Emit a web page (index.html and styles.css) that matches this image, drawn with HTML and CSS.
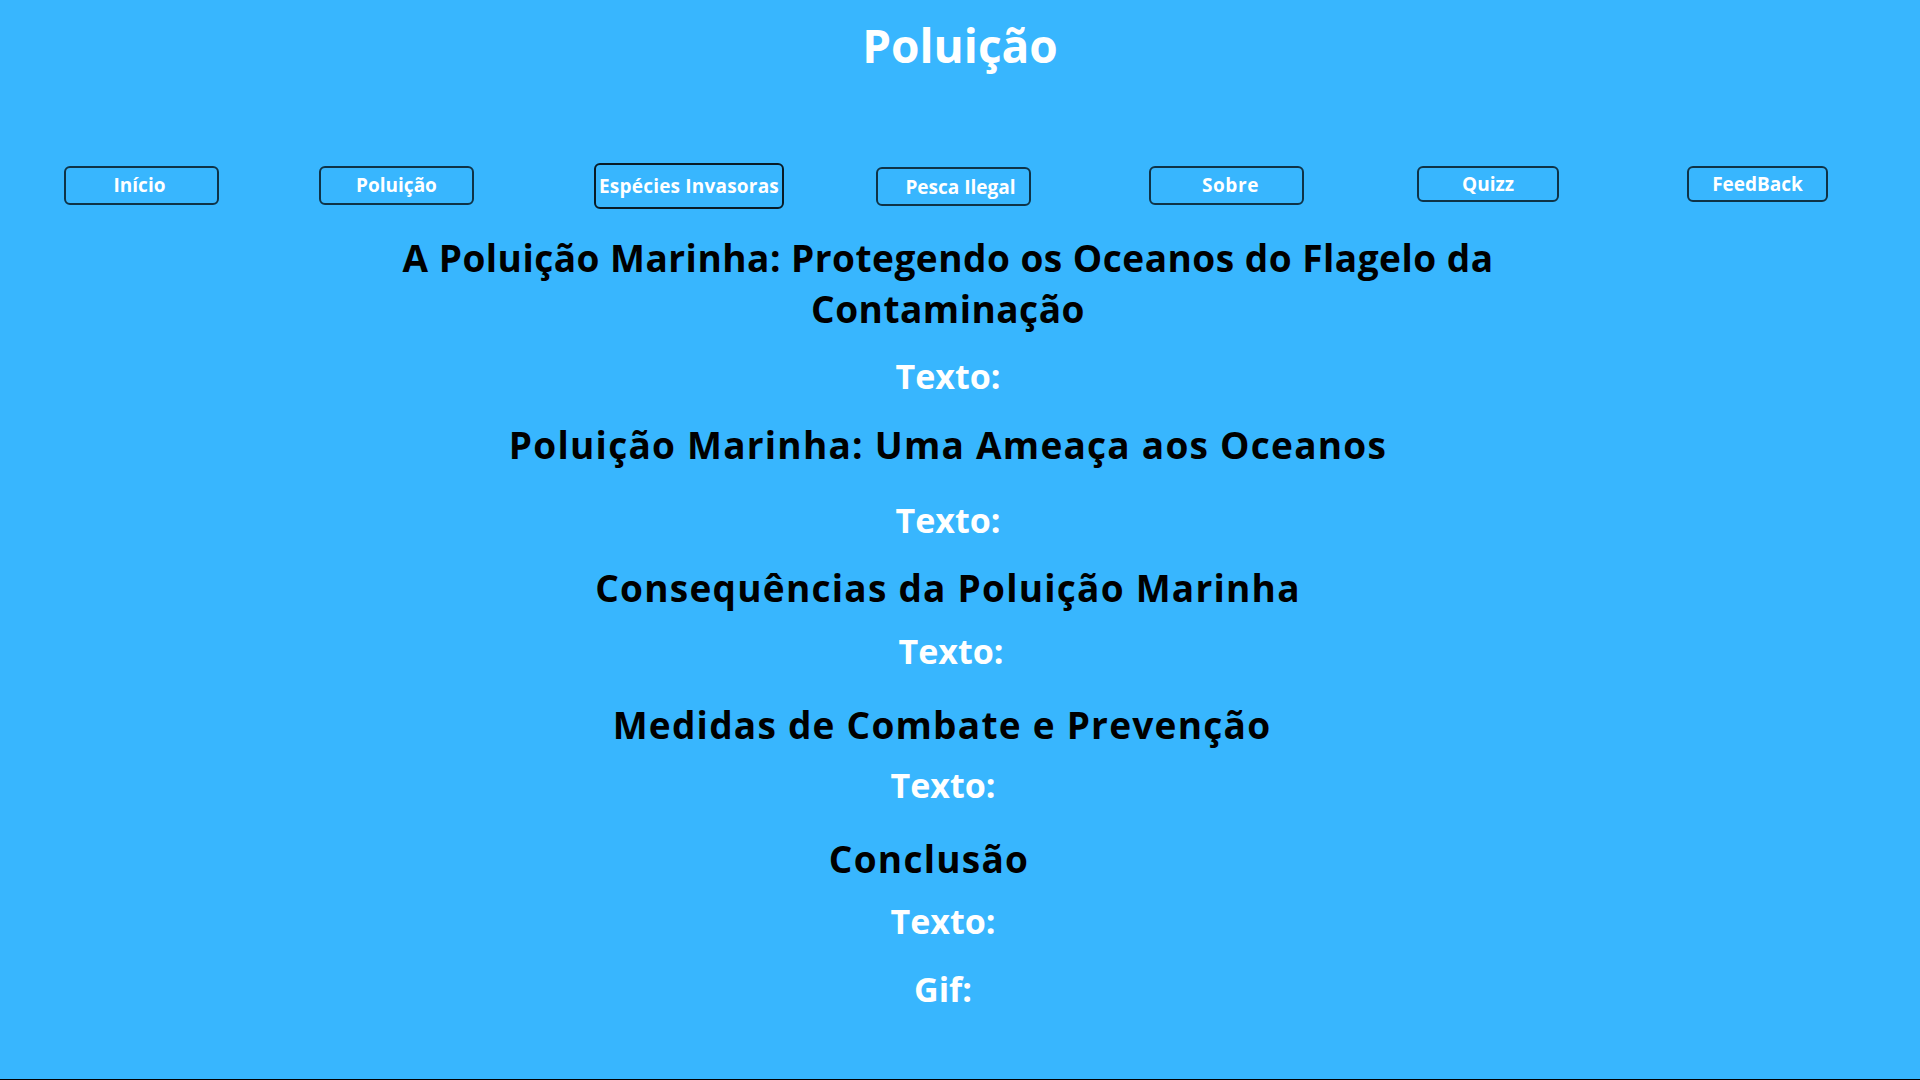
FILE: index.html
```html
<!DOCTYPE html>
<html lang="pt">
<head>
<meta charset="utf-8">
<title>Poluição</title>
<link rel="stylesheet" href="styles.css">
</head>
<body>
<div class="page">
  <h1 class="site-title">Poluição</h1>
  <nav class="nav">
    <button class="btn b-inicio">Início</button>
    <button class="btn b-poluicao">Poluição</button>
    <button class="btn b-especies">Espécies Invasoras</button>
    <button class="btn b-pesca">Pesca Ilegal</button>
    <button class="btn b-sobre">Sobre</button>
    <button class="btn b-quizz">Quizz</button>
    <button class="btn b-feedback">FeedBack</button>
  </nav>
  <main class="content">
    <h2 class="heading h-main">A Poluição Marinha: Protegendo os Oceanos do Flagelo da Contaminação</h2>
    <p class="label l1">Texto:</p>
    <h2 class="heading h-a">Poluição Marinha: Uma Ameaça aos Oceanos</h2>
    <p class="label l2">Texto:</p>
    <h2 class="heading h-b">Consequências da Poluição Marinha</h2>
    <p class="label l3">Texto:</p>
    <h2 class="heading h-c">Medidas de Combate e Prevenção</h2>
    <p class="label l4">Texto:</p>
    <h2 class="heading h-d">Conclusão</h2>
    <p class="label l5">Texto:</p>
    <p class="label l6">Gif:</p>
  </main>
</div>
</body>
</html>
```
FILE: styles.css
```css
html, body {
  margin: 0;
  padding: 0;
}
body {
  background: #38b6fe;
  font-family: "Open Sans", "Noto Sans", sans-serif;
  font-weight: 700;
}
.page {
  height: 1080px;
  box-sizing: border-box;
  border-bottom: 1px solid #000;
  overflow: hidden;
}
.site-title {
  margin: 0;
  padding-top: 15px;
  font-size: 46px;
  line-height: 60px;
  color: #fff;
  text-align: center;
  font-weight: 700;
}
.nav {
  display: flex;
  align-items: flex-start;
  margin-top: 91px;
  height: 39px;
}
.btn {
  box-sizing: border-box;
  height: 39px;
  width: 155px;
  padding: 0;
  background: transparent;
  border: 2px solid rgba(0, 0, 0, 0.72);
  border-radius: 6px;
  color: #fff;
  font-family: "Open Sans", "Noto Sans", sans-serif;
  font-weight: 700;
  font-size: 19px;
  line-height: 33px;
  text-align: center;
  white-space: nowrap;
}
.b-inicio { margin-left: 64px; padding-right: 4px; }
.b-poluicao { margin-left: 100px; }
.b-especies { margin-left: 120px; width: 190px; height: 46px; margin-top: -3px; border-color: rgba(0,0,0,0.85); letter-spacing: 0.2px; }
.b-pesca { margin-left: 92px; margin-top: 1px; padding-left: 14px; padding-top: 2px; }
.b-sobre { margin-left: 118px; padding-left: 8px; letter-spacing: 0.6px; }
.b-quizz { margin-left: 113px; width: 142px; height: 36px; line-height: 30px; }
.b-feedback { margin-left: 128px; width: 141px; height: 36px; line-height: 30px; }

.content {
  width: 1200px;
  margin-left: 348px;
  text-align: center;
}
.heading {
  margin: 0;
  font-size: 37px;
  line-height: 49px;
  letter-spacing: 1.25px;
  color: #000;
  font-weight: 700;
}
.label {
  margin: 0;
  font-size: 34px;
  line-height: 46px;
  color: #fff;
  font-weight: 700;
}
.h-main { margin-top: 27px; padding: 0 20px; line-height: 51px; letter-spacing: 0.5px; }
.l1 { margin-top: 19px; }
.h-a { margin-top: 21px; }
.l2 { margin-top: 28px; }
.h-b { margin-top: 20px; }
.l3 { margin-top: 16px; padding-left: 6px; }
.h-c { margin-top: 26px; padding-right: 12px; }
.l4 { margin-top: 13px; padding-right: 10px; }
.h-d { margin-top: 26px; padding-right: 38px; }
.l5 { margin-top: 15px; padding-right: 10px; }
.l6 { margin-top: 22px; padding-right: 10px; }
```
